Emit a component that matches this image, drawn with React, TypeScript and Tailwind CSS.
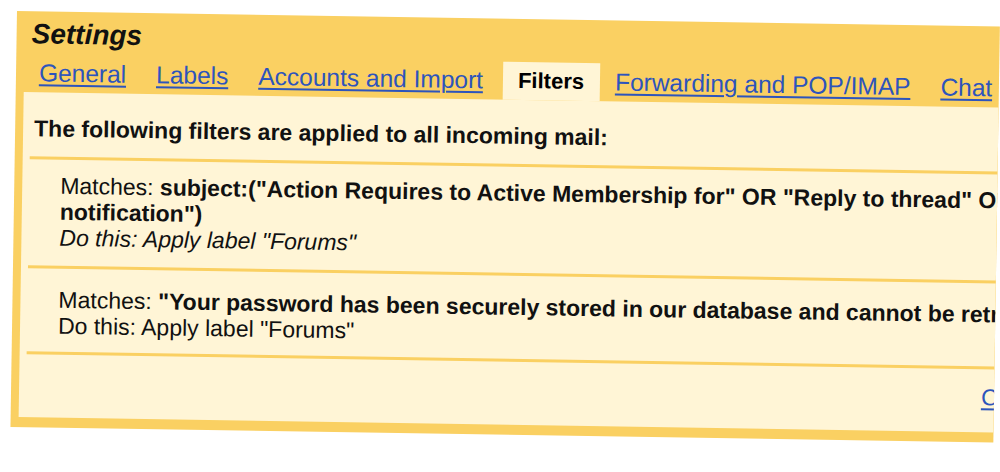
export default function App() {
  const tabs = ["General", "Labels", "Accounts and Import"]

  return (
    <div className="w-[1000px] h-[472px] overflow-hidden bg-white font-['Liberation_Sans',Arial,sans-serif] text-[#111]">
      <div className="ml-[17px] mt-[11px] w-[983px] origin-top-left rotate-[0.9deg] overflow-hidden bg-[#fad062] pl-[8px] pb-[10px]">
        <div className="h-[43px] pt-[7px] pl-[7px] text-[28px] leading-[32px] font-bold italic">Settings</div>

        <div className="flex h-[38px] items-end gap-[30px] pl-[15px] whitespace-nowrap text-[24.5px] leading-[24px]">
          {tabs.map((t) => (
            <a key={t} className="pb-[7px] text-[#2d54bc] underline decoration-[1.5px] underline-offset-[3px]">
              {t}
            </a>
          ))}
          <div className="ml-[-10px] mr-[-15px] h-[38px] bg-[#fff5d6] pt-[7px] pl-[15px] pr-[16px] text-[22px] font-bold text-black">
            Filters
          </div>
          <a className="pb-[7px] text-[#2d54bc] underline decoration-[1.5px] underline-offset-[3px]">Forwarding and POP/IMAP</a>
          <a className="pb-[7px] text-[#2d54bc] underline decoration-[1.5px] underline-offset-[3px]">Chat</a>
        </div>

        <div className="h-[325px] bg-[#fff5d6] whitespace-nowrap">
          <div className="pl-[11px] pt-[23px] text-[23px] leading-[26px] font-bold">
            The following filters are applied to all incoming mail:
          </div>
          <div className="ml-[7px] mt-[15px] h-[3px] bg-[#fad062]" />

          <div className="pl-[38px] pt-[13px] pb-[15px] text-[23px] leading-[26px]">
            <div>
              Matches: <b>subject:("Action Requires to Active Membership for" OR "Reply to thread" OR "New topic</b>
            </div>
            <div className="font-bold">notification")</div>
            <div className="italic">Do this: Apply label "Forums"</div>
          </div>
          <div className="ml-[7px] h-[3px] bg-[#fad062]" />

          <div className="pl-[38px] pt-[17.5px] pb-[13.5px] text-[23px] leading-[26px]">
            <div>
              Matches: <b>"Your password has been securely stored in our database and cannot be retrieved"</b>
            </div>
            <div>Do this: Apply label "Forums"</div>
          </div>
          <div className="ml-[7px] h-[3px] bg-[#fad062]" />

          <div className="pl-[962px] pt-[15px] text-[23px] leading-[26px]">
            <a className="text-[#2d54bc] underline decoration-[1.5px] underline-offset-[3px]">Create a new filter</a>
          </div>
        </div>
      </div>
    </div>
  )
}
